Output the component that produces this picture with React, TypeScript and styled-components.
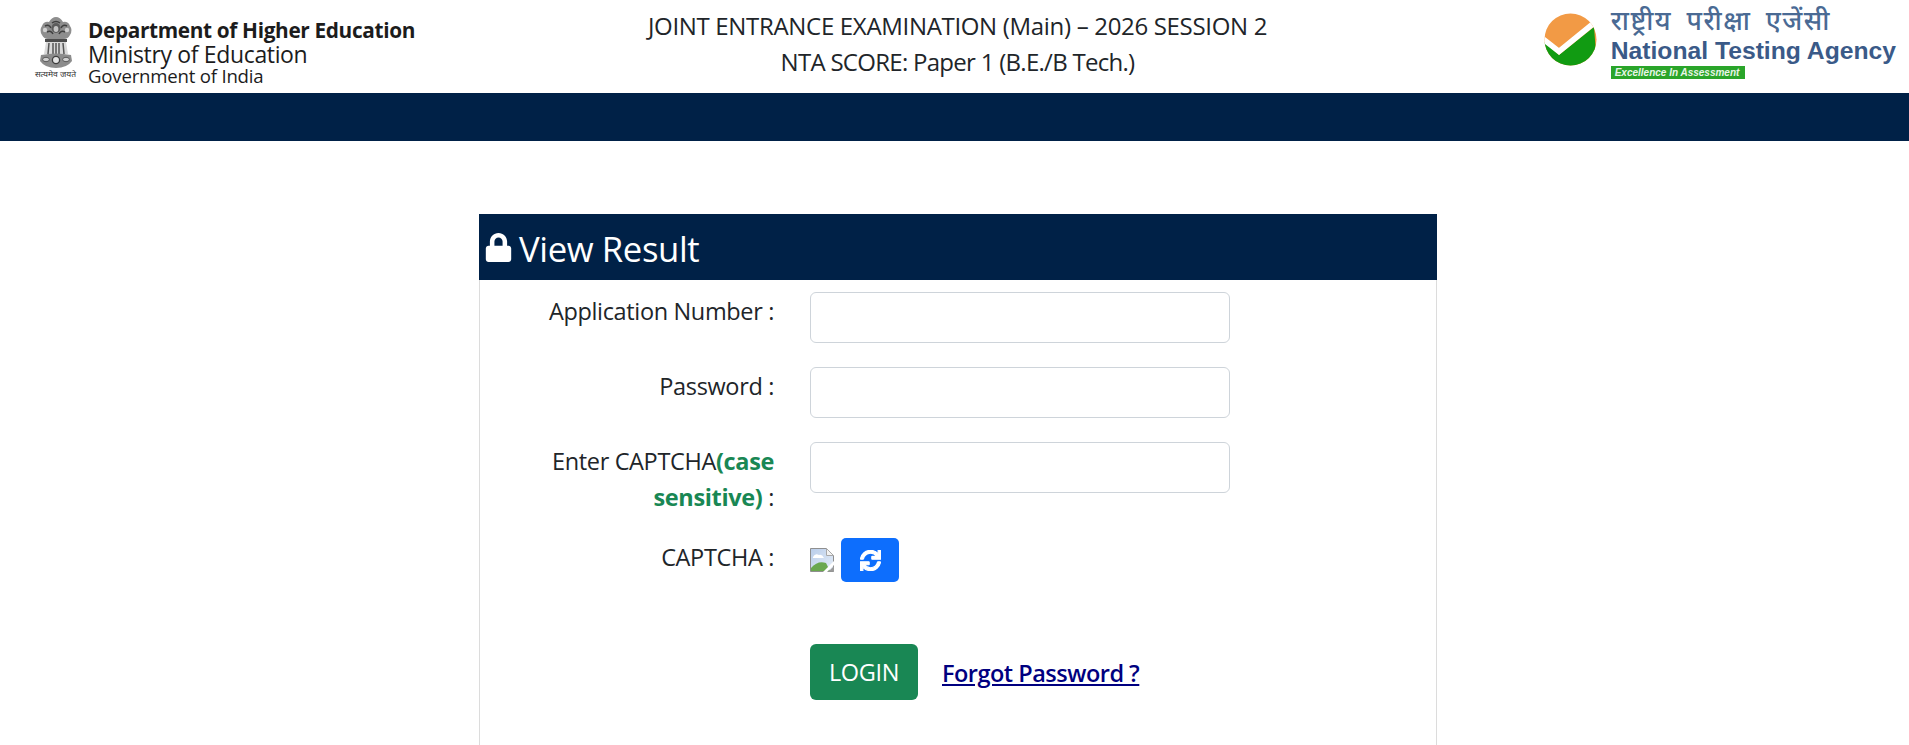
import React from "react";
import styled, { createGlobalStyle } from "styled-components";
import { FaLock, FaSync } from "react-icons/fa";

const Global = createGlobalStyle`
  html, body { margin: 0; padding: 0; background: #fff; overflow: hidden; }
  body { font-family: "Open Sans", "Noto Sans", "Liberation Sans", sans-serif; color: #212529; }
  * { box-sizing: border-box; }
`;

const TopBar = styled.header`
  height: 93px;
  display: grid;
  grid-template-columns: 1fr 660px 1fr;
  align-items: start;
  background: #fff;
`;
const LeftLogo = styled.div`
  display: flex;
  align-items: flex-start;
  padding: 17px 0 0 33px;
`;
const Emblem = styled.div`
  width: 45px;
  margin-right: 10px;
  display: flex;
  flex-direction: column;
  align-items: center;
`;
const EmblemCaption = styled.span`
  font-family: "Noto Sans Devanagari", "Noto Sans", "Liberation Serif", serif;
  font-size: 8.5px;
  line-height: 9px;
  margin-top: 2px;
  white-space: nowrap;
  color: #333;
`;
const LogoText = styled.div`
  display: flex;
  flex-direction: column;
  color: #1c1c1c;
  white-space: nowrap;
  padding-top: 1px;
`;
const Dept = styled.span`
  font-size: 20.8px;
  line-height: 24px;
  font-weight: 700;
  letter-spacing: -0.35px;
`;
const Ministry = styled.span`
  font-size: 23px;
  line-height: 24px;
  letter-spacing: -0.35px;
`;
const Gov = styled.span`
  font-size: 18.6px;
  line-height: 20px;
  letter-spacing: -0.2px;
`;
const CenterTitle = styled.div`
  padding: 8px 0 0 6px;
  text-align: center;
  color: #212529;
  white-space: nowrap;
`;
const TitleLine = styled.div<{ $tracking: number }>`
  font-size: 24px;
  line-height: 36px;
  letter-spacing: ${(p) => p.$tracking}px;
`;
const RightLogo = styled.div`
  display: flex;
  justify-content: flex-end;
  align-items: flex-start;
  gap: 14px;
  padding: 11px 13px 0 0;
`;
const NtaMarkSvg = styled.svg`
  margin-top: 2px;
  flex: none;
`;
const NtaText = styled.div`
  display: flex;
  flex-direction: column;
  align-items: flex-start;
  white-space: nowrap;
`;
const NtaHindi = styled.span`
  font-family: "Noto Sans Devanagari", "Noto Sans", "Liberation Sans", sans-serif;
  font-size: 26.5px;
  line-height: 26px;
  font-weight: 500;
  color: #4a6a94;
  word-spacing: 6px;
  letter-spacing: 1.5px;
`;
const NtaName = styled.span`
  font-family: "Liberation Sans", Arial, sans-serif;
  font-weight: 700;
  font-size: 24.7px;
  line-height: 28px;
  color: #3a5a88;
`;
const NtaTag = styled.span`
  margin-top: 1px;
  background: #2aa52a;
  color: #e8f5e8;
  font-family: "Liberation Sans", Arial, sans-serif;
  font-style: italic;
  font-weight: 700;
  font-size: 10px;
  line-height: 13px;
  padding: 0 4px;
  width: 134px;
  overflow: hidden;
`;
const NavStrip = styled.div`
  height: 48px;
  background: #002147;
`;
const Main = styled.main`
  width: 958px;
  margin: 73px auto 0 479px;
`;
const Card = styled.section`
  border: 1px solid #dcdcdc;
  border-top: 0;
  height: 700px;
`;
const CardHead = styled.h1`
  margin: 0 -1px;
  height: 66px;
  background: #002147;
  color: #fff;
  display: flex;
  align-items: center;
  gap: 6px;
  padding: 2px 0 0 5px;
  font-size: 34.7px;
  font-weight: 400;
  letter-spacing: -0.4px;
`;
const LockIcon = styled(FaLock)`
  margin-top: -2px;
`;
const Form = styled.form`
  padding-top: 12px;
  display: flex;
  flex-direction: column;
`;
const Row = styled.div<{ $h: number }>`
  display: grid;
  grid-template-columns: 295px 420px;
  column-gap: 35px;
  height: ${(p) => p.$h}px;
`;
const Label = styled.label`
  font-size: 23.5px;
  line-height: 36px;
  text-align: right;
  letter-spacing: -0.35px;
  padding: 1px 1px 0 40px;
`;
const Strong = styled.strong`
  color: #198754;
  font-weight: 700;
`;
const Input = styled.input`
  width: 420px;
  height: 51px;
  border: 1px solid #ced4da;
  border-radius: 6px;
  background: #fff;
`;
const CaptchaCell = styled.div`
  display: flex;
  align-items: flex-start;
  gap: 7px;
`;
const RefreshButton = styled.button`
  width: 58px;
  height: 44px;
  border: 0;
  border-radius: 5px;
  background: #0d6efd;
  color: #fff;
  display: flex;
  align-items: center;
  justify-content: center;
  font-size: 21px;
  padding: 0;
`;
const RefreshIcon = styled(FaSync)`
  stroke: currentColor;
  stroke-width: 28px;
`;
const BrokenIcon = styled.svg`
  margin-top: 10px;
  flex: none;
`;
const Actions = styled.div`
  display: flex;
  align-items: center;
  gap: 24px;
`;
const Login = styled.button`
  width: 108px;
  height: 56px;
  border: 0;
  border-radius: 6px;
  background: #198754;
  color: #fff;
  font-family: inherit;
  font-size: 23.5px;
  letter-spacing: -0.35px;
  padding: 0;
`;
const Forgot = styled.a`
  color: #000080;
  font-size: 23.5px;
  font-weight: 600;
  letter-spacing: -0.5px;
  padding-top: 1px;
  text-decoration: underline;
`;
const Blank = styled.span``;

const AshokaEmblem = () => (
  <svg width="34" height="51" viewBox="0 0 34 51" aria-label="emblem">
    <path d="M3 9 Q5 4 10 5 Q13 0 17 0 Q21 0 24 5 Q29 4 31 9 Q34 13 31 18 Q29 22 25 22 H9 Q5 22 3 18 Q0 13 3 9Z" fill="#8e8e8e" />
    <path d="M6 9 Q10 7 12 11 M28 9 Q24 7 22 11 M13 6 Q17 3 21 6 M8 15 Q12 13 14 17 M26 15 Q22 13 20 17" stroke="#3f3f3f" strokeWidth="1.5" fill="none" />
    <ellipse cx="17" cy="11" rx="4.5" ry="5" fill="#5c5c5c" />
    <ellipse cx="17" cy="12" rx="2.4" ry="3" fill="#c4c4c4" />
    <circle cx="6" cy="13" r="2.2" fill="#cfcfcf" />
    <circle cx="28" cy="13" r="2.2" fill="#cfcfcf" />
    <rect x="6" y="22" width="22" height="3" fill="#4c4c4c" />
    <path d="M7 25 H27 L29 37 H5 Z" fill="#d9d9d9" />
    <path d="M10 26 L9 37 M14 26 V37 M17 26 V37 M20 26 V37 M24 26 L25 37" stroke="#555" strokeWidth="1.5" fill="none" />
    <path d="M2 38 Q17 35 32 38 L33 44 Q28 51 17 51 Q6 51 1 44 Z" fill="#8c8c8c" />
    <circle cx="17" cy="43" r="3.6" fill="#e4e4e4" stroke="#3f3f3f" strokeWidth="1.3" />
    <ellipse cx="7" cy="42.5" rx="3.4" ry="2.2" fill="#d0d0d0" stroke="#444" strokeWidth="0.8" />
    <ellipse cx="27" cy="42.5" rx="3.4" ry="2.2" fill="#d0d0d0" stroke="#444" strokeWidth="0.8" />
  </svg>
);

const NtaMark = () => (
  <NtaMarkSvg width="53" height="53" viewBox="0 0 53 53" aria-label="NTA">
    <defs>
      <clipPath id="nta-disc">
        <circle cx="26.5" cy="26.5" r="26" />
      </clipPath>
    </defs>
    <g clipPath="url(#nta-disc)">
      <rect width="53" height="53" fill="#f29a45" />
      <path d="M0 29 L15 42 L50 14 L53 53 L0 53Z" fill="#119b12" />
      <path d="M-1 26 L15 38.5 L50 10" stroke="#fff" strokeWidth="5.5" fill="none" />
    </g>
  </NtaMarkSvg>
);

const Broken = () => (
  <BrokenIcon width="24" height="24" viewBox="0 0 24 24">
    <defs>
      <linearGradient id="sky" x1="0" y1="0" x2="1" y2="1">
        <stop offset="0" stopColor="#b9cdea" />
        <stop offset="1" stopColor="#e6eef8" />
      </linearGradient>
    </defs>
    <path d="M0.5 0.5H16.5L23.5 7.5V23.5H0.5Z" fill="url(#sky)" stroke="#8f8f8f" />
    <path d="M16.5 0.5V7.5H23.5Z" fill="#f2f2f2" stroke="#a8a8a8" />
    <path d="M3 9 Q5 5 9 7 Q12 6 14 10 H3Z" fill="#fff" />
    <path d="M1 23 V20 Q8 12 16 15 L20 23Z" fill="#6aa84f" />
    <path d="M13 24 L24 13 V17 L17 24Z" fill="#fff" />
    <path d="M18 24 L24 18 V23.5 H18Z" fill="#9a9a9a" />
  </BrokenIcon>
);

export default function App() {
  return (
    <>
      <Global />
      <TopBar>
        <LeftLogo>
          <Emblem>
            <AshokaEmblem />
            <EmblemCaption>सत्यमेव जयते</EmblemCaption>
          </Emblem>
          <LogoText>
            <Dept>Department of Higher Education</Dept>
            <Ministry>Ministry of Education</Ministry>
            <Gov>Government of India</Gov>
          </LogoText>
        </LeftLogo>
        <CenterTitle>
          <TitleLine $tracking={-0.32}>JOINT ENTRANCE EXAMINATION (Main) – 2026 SESSION 2</TitleLine>
          <TitleLine $tracking={-0.72}>NTA SCORE: Paper 1 (B.E./B Tech.)</TitleLine>
        </CenterTitle>
        <RightLogo>
          <NtaMark />
          <NtaText>
            <NtaHindi>राष्ट्रीय परीक्षा एजेंसी</NtaHindi>
            <NtaName>National Testing Agency</NtaName>
            <NtaTag>Excellence In Assessment</NtaTag>
          </NtaText>
        </RightLogo>
      </TopBar>
      <NavStrip />
      <Main>
        <Card>
          <CardHead>
            <LockIcon size={29} />
            View Result
          </CardHead>
          <Form>
            <Row $h={75}>
              <Label>Application Number :</Label>
              <Input />
            </Row>
            <Row $h={75}>
              <Label>Password :</Label>
              <Input type="password" />
            </Row>
            <Row $h={96}>
              <Label>
                Enter CAPTCHA<Strong>(case sensitive)</Strong> :
              </Label>
              <Input />
            </Row>
            <Row $h={106}>
              <Label>CAPTCHA :</Label>
              <CaptchaCell>
                <Broken />
                <RefreshButton type="button" aria-label="Refresh">
                  <RefreshIcon />
                </RefreshButton>
              </CaptchaCell>
            </Row>
            <Row $h={56}>
              <Blank />
              <Actions>
                <Login type="button">LOGIN</Login>
                <Forgot href="#">Forgot Password ?</Forgot>
              </Actions>
            </Row>
          </Form>
        </Card>
      </Main>
    </>
  );
}
